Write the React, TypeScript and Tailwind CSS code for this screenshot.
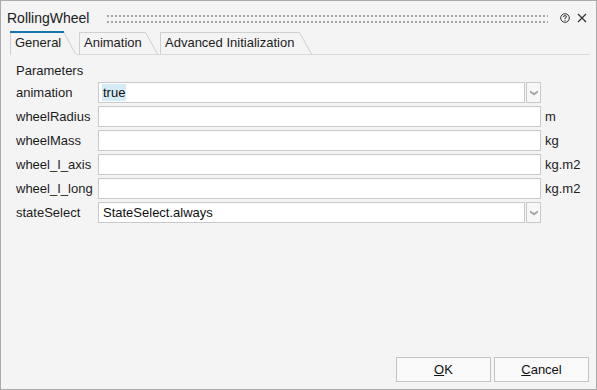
import React from "react";

const font = { fontFamily: '"Liberation Sans", Arial, sans-serif' };

function Tab({ label, width, active }: { label: string; width: number; active?: boolean }) {
  const h = active ? 24 : 22;
  return (
    <div
      className={
        active
          ? "relative h-[24px] mb-[-1px] bg-[#f4f4f4] pl-[5px] pt-[4px]"
          : "relative h-[22px] pl-[5px] pt-[3px]"
      }
      style={{ width }}
    >
      <svg className="absolute left-0 top-0" width={width} height={h}>
        <path
          d={`M0.5 ${h} V0.5 H${width - 12.5} L${width - 0.5} ${h - (active ? 1 : 0)}`}
          fill="none"
          stroke="#cfcfcf"
          strokeWidth="1"
        />
        {active && <rect x="0" y="0" width={width - 12} height="2" fill="#1676a9" />}
      </svg>
      <span className="relative block text-[13px] leading-[16px] text-[#1c1c1c] whitespace-nowrap">{label}</span>
    </div>
  );
}

function Arrow() {
  return (
    <svg width="8" height="6" viewBox="0 0 8 6">
      <polygon points="0,0.5 4,3 8,0.5 8,2.5 4,5.5 0,2.5" fill="#a3a3a3" />
    </svg>
  );
}

function Row({ label, value, unit, combo, selected }: { label: string; value?: string; unit?: string; combo?: boolean; selected?: boolean }) {
  return (
    <div className="flex items-center h-[21px]">
      <div className="w-[82px] text-[13px] leading-[16px] text-[#1c1c1c]">{label}</div>
      {combo ? (
        <div className="flex h-[21px] w-[443px]">
          <div className="flex items-center w-[428px] h-full border border-[#c9c9c9] bg-white pl-[3px]">
            <span className={selected ? "bg-[#d3ecf8] px-[1px] text-[13px] leading-[17px] text-[#111]" : "px-[1px] text-[13px] leading-[17px] text-[#111]"}>
              {value}
            </span>
          </div>
          <div className="ml-[1px] flex items-center justify-center w-[15px] h-full border border-[#c9c9c9] bg-[#f7f7f7]">
            <Arrow />
          </div>
        </div>
      ) : (
        <div className="w-[443px] h-[21px] border border-[#c9c9c9] bg-white" />
      )}
      {unit && <div className="ml-[4px] text-[13px] leading-[16px] text-[#1c1c1c]">{unit}</div>}
    </div>
  );
}

export default function App() {
  return (
    <div style={font} className="w-[597px] h-[390px] flex flex-col border border-[#ababab] bg-[#f4f4f4] overflow-hidden">
      <div className="flex items-start h-[30px] pt-[9px] pl-[6px] pr-[9px]">
        <div className="text-[14px] leading-[16px] text-[#202020]">RollingWheel</div>
        {/* drag grip */}
        <div className="ml-[18px] mt-[5px] flex-1 flex flex-col gap-[4px]">
          <div className="h-[2px] bg-[linear-gradient(to_right,#a6a6a6_2px,transparent_2px)] bg-[length:4px_2px]" />
          <div className="h-[2px] bg-[linear-gradient(to_right,#a6a6a6_2px,transparent_2px)] bg-[length:4px_2px]" />
        </div>
        <svg className="ml-[12px] mt-[3px]" width="10" height="10" viewBox="0 0 10 10">
          <circle cx="5" cy="5" r="4.3" fill="none" stroke="#333" strokeWidth="1" />
          <path d="M3.5 4 Q3.5 2.6 5 2.6 Q6.5 2.6 6.5 3.8 Q6.5 4.6 5 5.2 V6" fill="none" stroke="#333" strokeWidth="1" />
          <rect x="4.5" y="6.8" width="1" height="1" fill="#333" />
        </svg>
        <svg className="ml-[7px] mt-[3px]" width="10" height="10" viewBox="0 0 10 10">
          <path d="M1 1 L9 9 M9 1 L1 9" stroke="#333" strokeWidth="1.2" />
        </svg>
      </div>

      <div className="flex items-end h-[24px] ml-[9px] mr-[6px] border-b border-[#d9d9d9]">
        <Tab label="General" width={66} active />
        <div className="w-[3px]" />
        <Tab label="Animation" width={79} />
        <div className="w-[2px]" />
        <Tab label="Advanced Initialization" width={152} />
      </div>

      <div className="flex-1 flex flex-col pl-[15px] pt-[8px]">
        <div className="text-[13px] leading-[16px] text-[#1c1c1c]">Parameters</div>
        <div className="mt-[3px] flex flex-col gap-[3px]">
          <Row label="animation" value="true" combo selected />
          <Row label="wheelRadius" unit="m" />
          <Row label="wheelMass" unit="kg" />
          <Row label="wheel_I_axis" unit="kg.m2" />
          <Row label="wheel_I_long" unit="kg.m2" />
          <Row label="stateSelect" value="StateSelect.always" combo />
        </div>
      </div>

      <div className="flex justify-end gap-[3px] pr-[7px] pb-[7px]">
        <button className="w-[95px] h-[25px] border border-[#c4c4c4] bg-[#f9f9f9] text-[13px] text-[#111]">
          <span className="underline">O</span>K
        </button>
        <button className="w-[95px] h-[25px] border border-[#c4c4c4] bg-[#f9f9f9] text-[13px] text-[#111]">
          <span className="underline">C</span>ancel
        </button>
      </div>
    </div>
  );
}
